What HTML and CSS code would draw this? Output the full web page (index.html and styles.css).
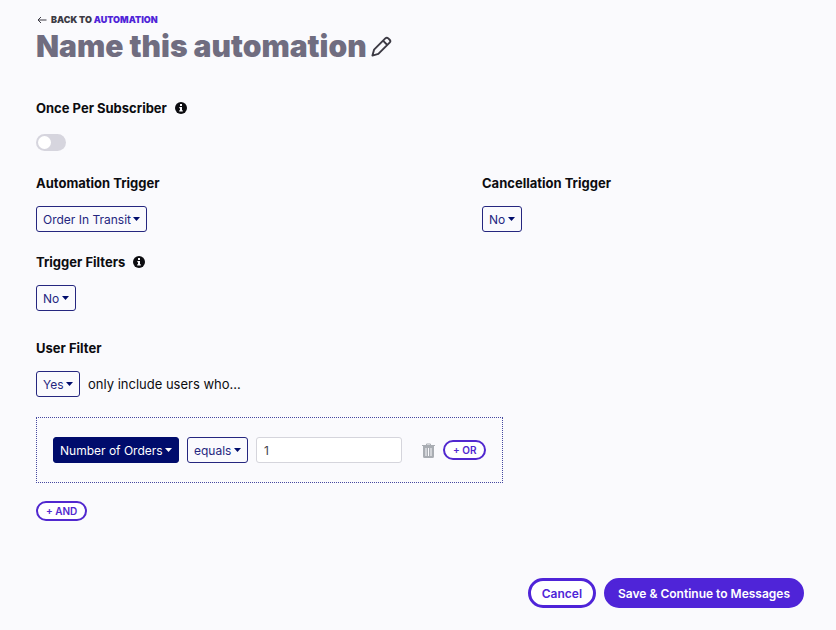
FILE: index.html
```html
<!DOCTYPE html>
<html lang="en">
<head>
    <meta charset="UTF-8">
    <meta name="viewport" content="width=device-width, initial-scale=1.0">
    <title>Name this automation</title>
    <link rel="stylesheet" href="styles.css">
</head>
<body>
    <header class="page-header">
        <nav class="back">
            <svg class="back-arrow" viewBox="0 0 10 8" aria-hidden="true"><path d="M9.5 4H1M4 1L1 4l3 3"/></svg>
            <span>BACK TO <a href="#automation">AUTOMATION</a></span>
        </nav>
        <div class="title-row">
            <h1>Name this automation</h1>
            <button type="button" class="icon-btn" aria-label="Edit name">
                <svg class="pencil" viewBox="0 0 22 22" aria-hidden="true"><path d="M1.500 20.500l1.700-6.200L15 2.500a2.200 2.200 0 0 1 3.100 0l1.400 1.400a2.200 2.200 0 0 1 0 3.100L7.700 18.800zM12.600 4.900l4.500 4.500"/></svg>
            </button>
        </div>
    </header>

    <form class="automation-form">
        <section class="field once">
            <h2>
                <label for="once">Once Per Subscriber</label>
                <svg class="info" viewBox="0 0 12 12" aria-hidden="true"><circle cx="6" cy="6" r="6"/><path d="M5 2h2v2H5zM4.300 5H7v3.300h.8V9.600H4.200V8.300H5V6.200h-.7z"/></svg>
            </h2>
            <input type="checkbox" id="once" class="toggle">
        </section>

        <div class="triggers">
            <section class="field">
                <h2><label for="trigger">Automation Trigger</label></h2>
                <select id="trigger" class="select">
                    <option>Order In Transit</option>
                </select>
            </section>
            <section class="field">
                <h2><label for="cancellation">Cancellation Trigger</label></h2>
                <select id="cancellation" class="select">
                    <option>No</option>
                </select>
            </section>
        </div>

        <section class="field trigger-filters">
            <h2>
                <label for="trigger-filters">Trigger Filters</label>
                <svg class="info" viewBox="0 0 12 12" aria-hidden="true"><circle cx="6" cy="6" r="6"/><path d="M5 2h2v2H5zM4.300 5H7v3.300h.8V9.600H4.200V8.300H5V6.200h-.7z"/></svg>
            </h2>
            <select id="trigger-filters" class="select">
                <option>No</option>
            </select>
        </section>

        <section class="field">
            <h2><label for="user-filter">User Filter</label></h2>
            <div class="user-filter">
                <select id="user-filter" class="select">
                    <option>Yes</option>
                </select>
                <span>only include users who...</span>
            </div>
        </section>

        <div class="rule">
            <select class="select select-filled" aria-label="Property">
                <option>Number of Orders</option>
            </select>
            <select class="select" aria-label="Comparison">
                <option>equals</option>
            </select>
            <input type="text" class="value" value="1" aria-label="Value">
            <div class="rule-actions">
                <button type="button" class="icon-btn" aria-label="Delete rule">
                    <svg class="trash" viewBox="0 0 13 15" aria-hidden="true"><path d="M0 2.500h13M4.500 2.500V1h4v1.500"/><path class="trash-can" d="M1 3h11v10.500q0 1.500-1.500 1.500h-8Q1 15 1 13.500zM3.500 5v8h1V5zM6 5v8h1V5zM8.500 5v8h1V5z"/></svg>
                </button>
                <button type="button" class="pill">+ OR</button>
            </div>
        </div>

        <button type="button" class="pill">+ AND</button>

        <footer class="actions">
            <button type="button" class="btn btn-outline">Cancel</button>
            <button type="submit" class="btn btn-primary">Save &amp; Continue to Messages</button>
        </footer>
    </form>
</body>
</html>
```

FILE: styles.css
```css
* {
    box-sizing: border-box;
}

body {
    margin: 0;
    padding: 14px 32px 22px 36px;
    background: #fafafd;
    color: #0c0c10;
    font-family: Inter, "Liberation Sans", sans-serif;
    font-size: 13px;
}

button,
select,
input {
    margin: 0;
    font-family: inherit;
}

button {
    cursor: pointer;
}

.back {
    display: flex;
    align-items: center;
    gap: 4px;
    padding-left: 1px;
    color: #3c3a44;
    font-size: 9px;
    font-weight: 900;
    line-height: 12px;
}

.back a {
    color: #4f24d8;
    text-decoration: none;
}

.back-arrow {
    width: 10px;
    height: 8px;
    fill: none;
    stroke: #3c3a44;
}

.title-row {
    display: flex;
    align-items: center;
    gap: 4px;
}

h1 {
    margin: 0;
    color: #706d80;
    font-size: 30px;
    font-weight: 900;
    line-height: 40px;
}

.icon-btn {
    display: flex;
    padding: 0;
    border: 0;
    background: none;
}

.pencil {
    width: 21px;
    height: 21px;
    fill: none;
    stroke: #3c3a44;
    stroke-width: 2;
    stroke-linejoin: round;
}

.automation-form {
    margin-top: 32px;
}

.field h2 {
    display: flex;
    align-items: center;
    gap: 8px;
    margin: 0 0 13px;
    font-size: 13px;
    font-weight: 700;
    line-height: 20px;
}

.info {
    width: 12px;
    height: 12px;
    fill: #0c0c10;
}

.info path {
    fill: #fafafd;
}

.once {
    margin-bottom: 22px;
}

.field.once h2 {
    margin-bottom: 16px;
}

.toggle {
    display: flex;
    align-items: center;
    width: 30px;
    height: 17px;
    padding: 2px;
    border-radius: 9px;
    background: #d6d5de;
    appearance: none;
}

.toggle::before {
    content: "";
    width: 13px;
    height: 13px;
    border-radius: 50%;
    background: #fff;
}

.toggle:checked {
    justify-content: flex-end;
    background: #4f24d8;
}

.triggers {
    display: grid;
    grid-template-columns: 446px 1fr;
    margin-bottom: 20px;
}

.trigger-filters {
    margin-bottom: 27px;
}

.select {
    display: block;
    height: 26px;
    padding: 0 15px 0 6px;
    border: 1px solid #25267f;
    border-radius: 3px;
    background: url("data:image/svg+xml,%3Csvg xmlns='http://www.w3.org/2000/svg' width='7' height='4'%3E%3Cpath d='M0 0h7L3.500 4z' fill='%23000c6c'/%3E%3C/svg%3E") no-repeat right 6px top 10px;
    color: #25267f;
    font-size: 12px;
    appearance: none;
}

.select-filled {
    border-color: #000c6c;
    background-color: #000c6c;
    background-image: url("data:image/svg+xml,%3Csvg xmlns='http://www.w3.org/2000/svg' width='7' height='4'%3E%3Cpath d='M0 0h7L3.500 4z' fill='white'/%3E%3C/svg%3E");
    color: #fff;
}

.user-filter {
    display: flex;
    align-items: center;
    gap: 8px;
}

.rule {
    display: flex;
    align-items: center;
    gap: 8px;
    width: fit-content;
    margin: 20px 0 18px;
    padding: 19px 16px;
    border: 1px dotted #4548a0;
}

.value {
    width: 146px;
    height: 26px;
    padding: 0 7px;
    border: 1px solid #d5d5dc;
    border-radius: 3px;
    background: #fff;
    color: #44444c;
    font-size: 12px;
}

.rule-actions {
    display: flex;
    align-items: center;
    gap: 8px;
    margin-left: 12px;
}

.trash {
    width: 13px;
    height: 15px;
    fill: none;
    stroke: #a9adb3;
}

.trash-can {
    fill: #a9adb3;
    fill-rule: evenodd;
    stroke: none;
}

.pill {
    height: 20px;
    padding: 0 8px;
    border: 2px solid #5128cf;
    border-radius: 10px;
    background: #fff;
    color: #5128cf;
    font-size: 10px;
    font-weight: 600;
}

.actions {
    display: flex;
    justify-content: flex-end;
    gap: 8px;
    margin-top: 57px;
}

.btn {
    height: 30px;
    padding: 0 11px;
    border: 3px solid #4f24d8;
    border-radius: 15px;
    font-size: 12px;
    font-weight: 600;
}

.btn-outline {
    background: #fff;
    color: #4f24d8;
}

.btn-primary {
    background: #4f24d8;
    color: #fff;
}
```
